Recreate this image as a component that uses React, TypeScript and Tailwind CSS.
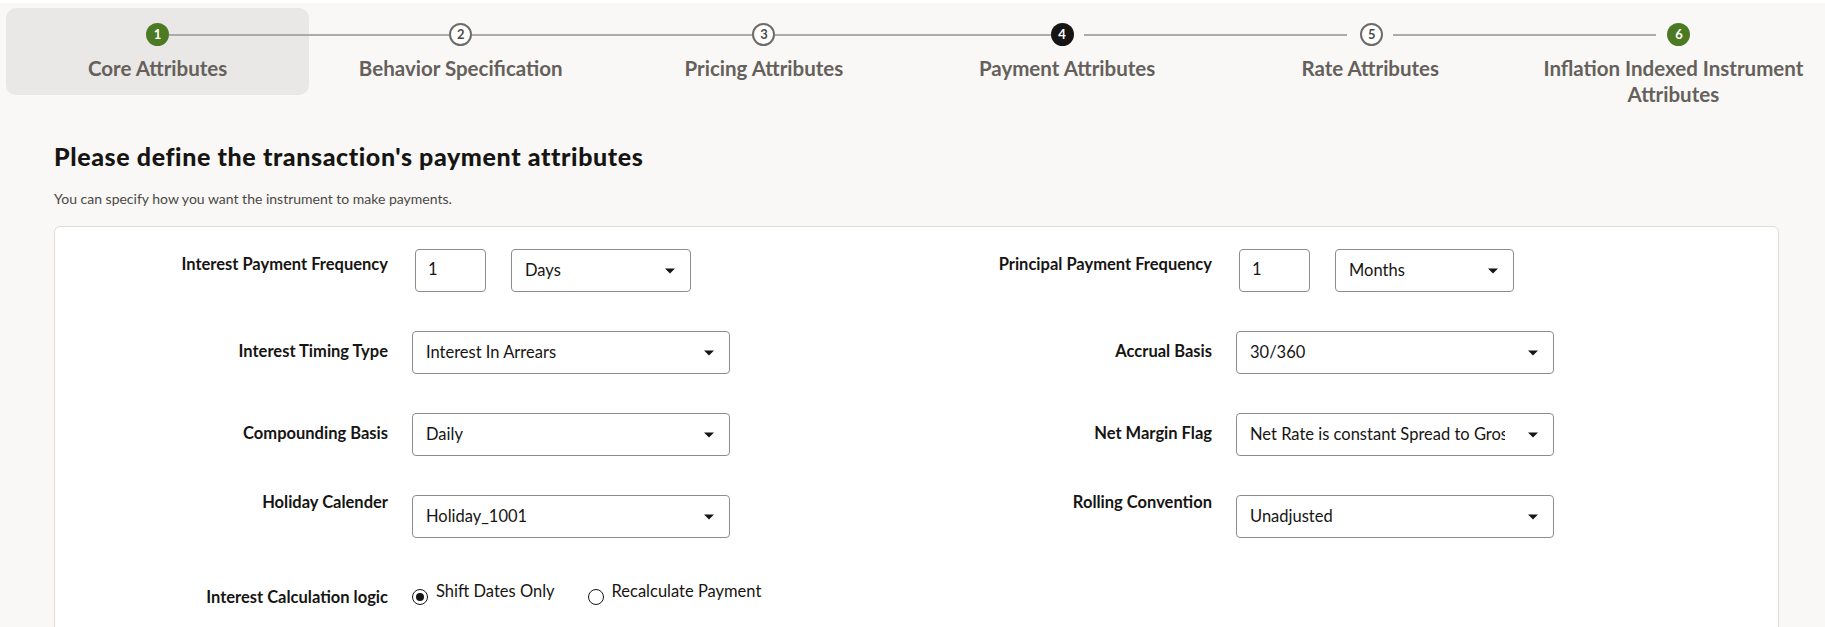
import React from "react";

type StepState = "done" | "current" | "todo";

interface Step {
  n: number;
  label: string;
  state: StepState;
}

const steps: Step[] = [
  { n: 1, label: "Core Attributes", state: "done" },
  { n: 2, label: "Behavior Specification", state: "todo" },
  { n: 3, label: "Pricing Attributes", state: "todo" },
  { n: 4, label: "Payment Attributes", state: "current" },
  { n: 5, label: "Rate Attributes", state: "todo" },
  { n: 6, label: "Inflation Indexed Instrument Attributes", state: "done" },
];

const font = { fontFamily: "Lato, 'Noto Sans', sans-serif" };

const Chevron = () => (
  <svg width="10" height="6" viewBox="0 0 10 6" className="shrink-0">
    <path d="M0 0.5 L10 0.5 L5 5.5 Z" fill="#161513" />
  </svg>
);

const Select = ({ value, className = "" }: { value: string; className?: string }) => (
  <div
    className={`h-[43px] flex items-center pl-[13px] pr-[15px] bg-white border border-[#8f8d8b] rounded-[4px] text-[16.5px] text-[#161513] ${className}`}
  >
    <div className="flex-1 min-w-0 mr-[23px] overflow-hidden whitespace-nowrap">{value}</div>
    <Chevron />
  </div>
);

const NumberBox = ({ value }: { value: string }) => (
  <div className="ml-[3px] w-[71px] h-[43px] flex items-center pl-[12px] pb-[2px] bg-white border border-[#8f8d8b] rounded-[4px] text-[16.5px] text-[#161513]">
    {value}
  </div>
);

const Radio = ({ label, checked }: { label: string; checked?: boolean }) => (
  <div className="flex items-start gap-[8px]">
    <span className="mt-[10px] w-[16px] h-[16px] rounded-full border-[1.5px] border-[#161513] flex items-center justify-center bg-white">
      {checked && <span className="w-[8px] h-[8px] rounded-full bg-[#161513]" />}
    </span>
    <span className="text-[16.5px] leading-[24px] text-[#161513]">{label}</span>
  </div>
);

const Field = ({
  label,
  labelWidth,
  labelClass,
  children,
}: {
  label: string;
  labelWidth: string;
  labelClass: string;
  children: React.ReactNode;
}) => (
  <div className="flex items-start">
    <div
      className={`${labelWidth} ${labelClass} shrink-0 pr-[24px] text-right text-[16.5px] leading-[24px] font-bold text-[#161513]`}
    >
      {label}
    </div>
    {children}
  </div>
);

const StepItem = ({ step, first, last }: { step: Step; first: boolean; last: boolean }) => {
  const circle =
    step.state === "done"
      ? "bg-[#4b7a23] text-white"
      : step.state === "current"
        ? "bg-[#161513] text-white"
        : "bg-white border-2 border-[#6e6c6a] text-[#4e4b48]";
  const leftGap = step.n === 5 ? "mr-[13px]" : step.n === 6 ? "mr-[11px]" : "";
  const rightGap = step.n === 4 || step.n === 5 ? "ml-[10px]" : "";
  return (
    <div
      className={`flex flex-col items-center pt-[15px] pb-[14px] ${
        step.n === 1 ? "bg-[#e9e8e6] rounded-[10px]" : ""
      }`}
    >
      <div className="w-full flex items-center">
        <div className={`flex-1 h-[2px] ${first ? "" : "bg-[#ababab]"} ${leftGap}`} />
        <div
          className={`w-[23px] h-[23px] rounded-full flex items-center justify-center text-[13px] font-bold ${circle}`}
        >
          {step.n}
        </div>
        <div className={`flex-1 h-[2px] ${last ? "" : "bg-[#ababab]"} ${rightGap}`} />
      </div>
      <div className="mt-[9px] px-[8px] text-center text-[20.5px] leading-[26px] font-bold text-[#65605b]">
        {step.label}
      </div>
    </div>
  );
};

export default function App() {
  const L = "w-[357px]";
  const R = "w-[319px]";
  return (
    <div className="min-h-screen bg-[#f9f8f6] border-t-[3px] border-white" style={font}>
      {/* Train */}
      <div className="grid grid-cols-6 items-start pl-[6px] pt-[5px]">
        {steps.map((s, i) => (
          <StepItem key={s.n} step={s} first={i === 0} last={i === steps.length - 1} />
        ))}
      </div>

      <div className="pl-[54px] pr-[46px]">
        <h1 className="mt-[19px] text-[25px] leading-[32px] font-black tracking-[0.6px] text-[#161513]">
          Please define the transaction's payment attributes
        </h1>
        <p className="mt-[17px] text-[14px] leading-[20px] text-[#4a4845]">
          You can specify how you want the instrument to make payments.
        </p>

        {/* Form card */}
        <div className="mt-[17px] bg-white border border-[#e0ddd9] rounded-[6px] pt-[22px] pb-[60px]">
          <div className="grid grid-cols-[862px_1fr] gap-y-[39px]">
            <Field label="Interest Payment Frequency" labelWidth={L} labelClass="pt-[3px]">
              <NumberBox value="1" />
              <Select value="Days" className="ml-[25px] w-[180px]" />
            </Field>
            <Field label="Principal Payment Frequency" labelWidth={R} labelClass="pt-[3px]">
              <NumberBox value="1" />
              <Select value="Months" className="ml-[25px] w-[179px]" />
            </Field>

            <Field label="Interest Timing Type" labelWidth={L} labelClass="pt-[8px]">
              <Select value="Interest In Arrears" className="w-[318px]" />
            </Field>
            <Field label="Accrual Basis" labelWidth={R} labelClass="pt-[8px]">
              <Select value="30/360" className="w-[318px]" />
            </Field>

            <Field label="Compounding Basis" labelWidth={L} labelClass="pt-[8px]">
              <Select value="Daily" className="w-[318px]" />
            </Field>
            <Field label="Net Margin Flag" labelWidth={R} labelClass="pt-[8px]">
              <Select value="Net Rate is constant Spread to Gross Rate" className="w-[318px]" />
            </Field>

            <Field label="Holiday Calender" labelWidth={L} labelClass="-mt-[5px]">
              <Select value="Holiday_1001" className="w-[318px]" />
            </Field>
            <Field label="Rolling Convention" labelWidth={R} labelClass="-mt-[5px]">
              <Select value="Unadjusted" className="w-[318px]" />
            </Field>

            <div className="mt-[2px]">
              <Field label="Interest Calculation logic" labelWidth={L} labelClass="pt-[6px]">
                <div className="flex items-start gap-[33px]">
                  <Radio label="Shift Dates Only" checked />
                  <Radio label="Recalculate Payment" />
                </div>
              </Field>
            </div>
            <div />
          </div>
        </div>
      </div>
    </div>
  );
}
